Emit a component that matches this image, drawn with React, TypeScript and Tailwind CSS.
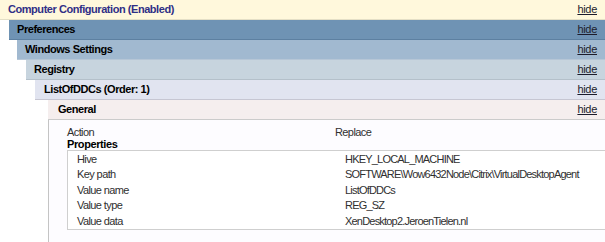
const font = { fontFamily: '"Liberation Sans", Arial, sans-serif' };

type BarProps = {
  title: string;
  className: string;
  titleClass?: string;
};

const Bar = ({ title, className, titleClass = "text-black" }: BarProps) => (
  <div className={`flex h-[20px] items-center justify-between pr-[8px] ${className}`}>
    <span className={`text-[11px] font-bold tracking-[-0.45px] ${titleClass}`}>{title}</span>
    <a href="#" className="text-[11px] tracking-[-0.3px] text-[#1c1c2c] underline">
      hide
    </a>
  </div>
);

const properties = [
  ["Hive", "HKEY_LOCAL_MACHINE"],
  ["Key path", "SOFTWARE\\Wow6432Node\\Citrix\\VirtualDesktopAgent"],
  ["Value name", "ListOfDDCs"],
  ["Value type", "REG_SZ"],
  ["Value data", "XenDesktop2.JeroenTielen.nl"],
];

export default function App() {
  return (
    <div className="h-[242px] w-[605px] overflow-hidden bg-white" style={font}>
      <Bar
        title="Computer Configuration (Enabled)"
        className="border-b border-[#e4dfc6] bg-[#fff8dc] pl-[8px]"
        titleClass="text-[#2f2f86]"
      />
      <div className="ml-[9px]">
        <Bar title="Preferences" className="border-b border-[#5d80a1] bg-[#6f93b4] pl-[8px]" />
        <div className="ml-[8px]">
          <Bar title="Windows Settings" className="border-b border-[#b6c6d6] bg-[#a1b9d0] pl-[8px]" />
          <div className="ml-[9px]">
            <Bar title="Registry" className="border-b border-[#b4c0ca] bg-[#c7d4de] pl-[8px]" />
            <div className="ml-[9px]">
              <Bar
                title="ListOfDDCs (Order: 1)"
                className="border-b border-[#c6c6d2] bg-[#e1e4f0] pl-[9px]"
              />
              <div className="ml-[13px]">
                <Bar title="General" className="h-[19px] border-b border-[#cbcbcb] bg-[#f5eeee] pl-[10px]" />
                <div className="border-b border-l border-[#c4c4c4] bg-[#fdfcff] pb-[13px] pl-[18px] pt-[5px] text-[11px] tracking-[-0.6px] text-[#303030]">
                  <div className="flex h-[14px] items-center">
                    <span className="w-[268px]">Action</span>
                    <span>Replace</span>
                  </div>
                  <div className="flex h-[11px] items-center font-bold tracking-[-0.4px] text-black">
                    Properties
                  </div>
                  <div className="border-b border-l border-t border-[#cfcfcf] bg-white">
                    {properties.map(([label, value]) => (
                      <div key={label} className="flex h-[15.5px] items-center pl-[9px]">
                        <span className="w-[268px]">{label}</span>
                        <span className="tracking-[-0.8px]">{value}</span>
                      </div>
                    ))}
                  </div>
                </div>
              </div>
            </div>
          </div>
        </div>
      </div>
    </div>
  );
}
